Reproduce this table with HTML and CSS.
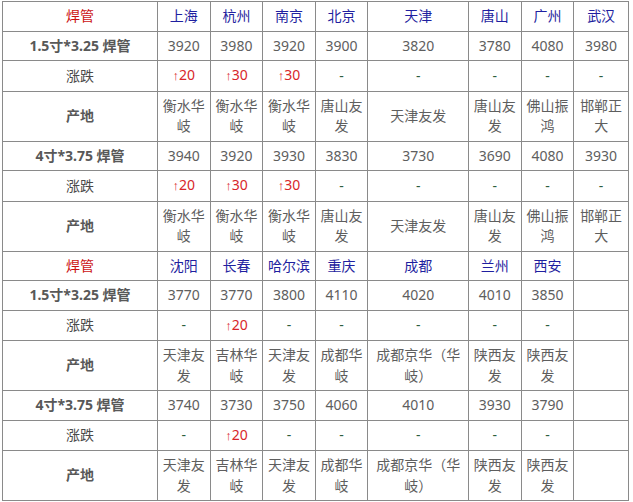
FILE: index.html
```html
<!DOCTYPE html>
<html lang="zh">
<head>
<meta charset="utf-8">
<link rel="stylesheet" href="styles.css">
</head>
<body>
<table class="price">
<colgroup>
<col class="c-label"><col class="c-n"><col class="c-n"><col class="c-n"><col class="c-n"><col class="c-w"><col class="c-n"><col class="c-n"><col class="c-last">
</colgroup>
<tbody>
<tr><td class="head">焊管</td><td class="city">上海</td><td class="city">杭州</td><td class="city">南京</td><td class="city">北京</td><td class="city">天津</td><td class="city">唐山</td><td class="city">广州</td><td class="city">武汉</td></tr>
<tr><td class="label">1.5寸*3.25 焊管</td><td>3920</td><td>3980</td><td>3920</td><td>3900</td><td>3820</td><td>3780</td><td>4080</td><td>3980</td></tr>
<tr><td class="label light">涨跌</td><td class="up"><span class="arrow">↑</span>20</td><td class="up"><span class="arrow">↑</span>30</td><td class="up"><span class="arrow">↑</span>30</td><td class="dash">-</td><td class="dash">-</td><td class="dash">-</td><td class="dash">-</td><td class="dash">-</td></tr>
<tr><td class="label">产地</td><td>衡水华岐</td><td>衡水华岐</td><td>衡水华岐</td><td>唐山友发</td><td>天津友发</td><td>唐山友发</td><td>佛山振鸿</td><td>邯郸正大</td></tr>
<tr><td class="label">4寸*3.75 焊管</td><td>3940</td><td>3920</td><td>3930</td><td>3830</td><td>3730</td><td>3690</td><td>4080</td><td>3930</td></tr>
<tr><td class="label light">涨跌</td><td class="up"><span class="arrow">↑</span>20</td><td class="up"><span class="arrow">↑</span>30</td><td class="up"><span class="arrow">↑</span>30</td><td class="dash">-</td><td class="dash">-</td><td class="dash">-</td><td class="dash">-</td><td class="dash">-</td></tr>
<tr><td class="label">产地</td><td>衡水华岐</td><td>衡水华岐</td><td>衡水华岐</td><td>唐山友发</td><td>天津友发</td><td>唐山友发</td><td>佛山振鸿</td><td>邯郸正大</td></tr>
<tr><td class="head">焊管</td><td class="city">沈阳</td><td class="city">长春</td><td class="city">哈尔滨</td><td class="city">重庆</td><td class="city">成都</td><td class="city">兰州</td><td class="city">西安</td><td></td></tr>
<tr><td class="label">1.5寸*3.25 焊管</td><td>3770</td><td>3770</td><td>3800</td><td>4110</td><td>4020</td><td>4010</td><td>3850</td><td></td></tr>
<tr><td class="label light">涨跌</td><td class="dash">-</td><td class="up"><span class="arrow">↑</span>20</td><td class="dash">-</td><td class="dash">-</td><td class="dash">-</td><td class="dash">-</td><td class="dash">-</td><td></td></tr>
<tr><td class="label">产地</td><td>天津友发</td><td>吉林华岐</td><td>天津友发</td><td>成都华岐</td><td>成都京华（华岐）</td><td>陕西友发</td><td>陕西友发</td><td></td></tr>
<tr><td class="label">4寸*3.75 焊管</td><td>3740</td><td>3730</td><td>3750</td><td>4060</td><td>4010</td><td>3930</td><td>3790</td><td></td></tr>
<tr><td class="label light">涨跌</td><td class="dash">-</td><td class="up"><span class="arrow">↑</span>20</td><td class="dash">-</td><td class="dash">-</td><td class="dash">-</td><td class="dash">-</td><td class="dash">-</td><td></td></tr>
<tr><td class="label">产地</td><td>天津友发</td><td>吉林华岐</td><td>天津友发</td><td>成都华岐</td><td>成都京华（华岐）</td><td>陕西友发</td><td>陕西友发</td><td></td></tr>
</tbody>
</table>
</body>
</html>
```

FILE: styles.css
```css
html, body {
  margin: 0;
  padding: 0;
  background: #ffffff;
}

body {
  padding: 1px 0 0 2px;
  font-family: "Noto Sans", "Noto Sans CJK SC", sans-serif;
  font-size: 14px;
}

.price {
  border-collapse: collapse;
  table-layout: fixed;
  width: 627px;
  border: 1px solid #3a3a3a;
}

.c-label { width: 155px; }
.c-n { width: 52.6px; }
.c-w { width: 100.7px; }
.c-last { width: 54.7px; }

.price td {
  border: 1px solid #8a8a8a;
  padding: 4px 2px;
  line-height: 20.5px;
  text-align: center;
  vertical-align: middle;
  color: #5e5e5e;
  word-break: break-all;
}

.price td.head {
  color: #cc1111;
}

.price td.city {
  color: #1f1fa0;
}

.price td.label {
  font-weight: bold;
  color: #585858;
}

.price td.label.light {
  font-weight: normal;
  color: #4a4a4a;
}

.price td.up {
  color: #d8262a;
}

.arrow {
  font-family: "Liberation Sans", sans-serif;
  font-size: 13px;
}

.price td.dash {
  color: #2e5e3e;
}
```
